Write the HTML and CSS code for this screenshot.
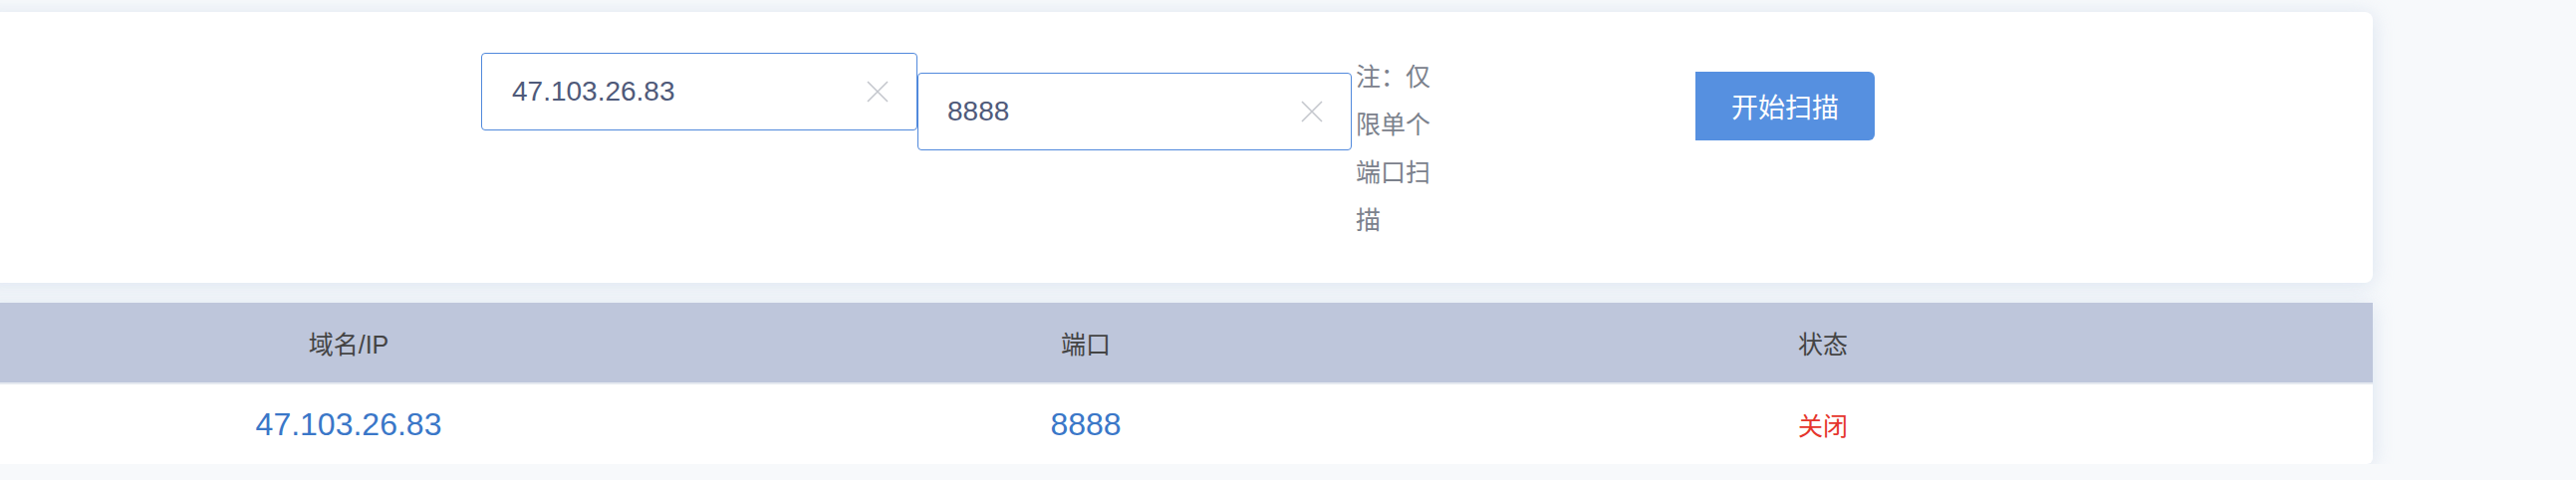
FILE: index.html
```html
<!DOCTYPE html>
<html lang="zh-CN">
<head>
<meta charset="utf-8">
<title>端口扫描</title>
<link rel="stylesheet" href="styles.css">
</head>
<body>
<div class="main">
  <div class="card">
    <div class="field field-host">
      <span class="field-value">47.103.26.83</span>
      <svg class="clear" viewBox="0 0 24 24" width="24" height="24"><path d="M2 2L22 22M22 2L2 22" stroke="#c4c7cd" stroke-width="1.6" fill="none"/></svg>
    </div>
    <div class="field field-port">
      <span class="field-value">8888</span>
      <svg class="clear" viewBox="0 0 24 24" width="24" height="24"><path d="M2 2L22 22M22 2L2 22" stroke="#c4c7cd" stroke-width="1.6" fill="none"/></svg>
    </div>
    <div class="note">注：仅限单个端口扫描</div>
    <button class="scan-btn">开始扫描</button>
  </div>

  <div class="result">
    <div class="row head">
      <div class="cell">域名/IP</div>
      <div class="cell">端口</div>
      <div class="cell">状态</div>
      <div class="cell"></div>
    </div>
    <div class="row body">
      <div class="cell link">47.103.26.83</div>
      <div class="cell link">8888</div>
      <div class="cell closed">关闭</div>
      <div class="cell"></div>
    </div>
  </div>
</div>
</body>
</html>
```

FILE: styles.css
```css
* { box-sizing: border-box; }

html, body {
  margin: 0;
  padding: 0;
  background: #f7f9fb;
  font-family: "Liberation Sans", "Noto Sans CJK SC", sans-serif;
  overflow: hidden;
}

.main {
  margin-left: -20px;
  width: 2402px;
  padding-top: 12px;
}

.card {
  height: 272px;
  background: #fff;
  border-radius: 8px;
  box-shadow: 0 2px 20px rgba(185, 202, 228, 0.45);
  display: flex;
  align-items: flex-start;
  padding-top: 41px;
  padding-left: 503px;
}

.field {
  height: 78px;
  width: 438px;
  border: 1.5px solid #5189dc;
  border-radius: 4px;
  display: flex;
  align-items: center;
  justify-content: space-between;
  padding: 0 27px 0 30px;
  background: #fff;
}

.field-port {
  width: 436px;
  margin-top: 20px;
  padding-left: 29px;
}

.field-value {
  font-size: 28px;
  color: #4f5a7a;
}

.clear { display: block; }

.note {
  width: 76px;
  margin-left: 4px;
  font-size: 25px;
  line-height: 48px;
  color: #7b818c;
  word-break: break-all;
}

.scan-btn {
  margin-left: 265px;
  margin-top: 19px;
  width: 180px;
  height: 69px;
  border: none;
  border-radius: 0 6px 6px 0;
  background: #5690e0;
  color: #fff;
  font-family: "Liberation Sans", "Noto Sans CJK SC", sans-serif;
  font-size: 27px;
  padding: 0;
}

.result {
  margin-top: 20px;
  background: #fff;
  border-radius: 0 0 6px 6px;
  box-shadow: 0 2px 20px rgba(185, 202, 228, 0.45);
  overflow: hidden;
}

.row {
  display: grid;
  grid-template-columns: 740px 740px 740px 1fr;
  height: 80px;
  align-items: center;
  text-align: center;
}

.head {
  background: #bec6db;
  color: #444;
  font-size: 25px;
}

.body {
  height: 82px;
  border-top: 2px solid #e5e9f0;
}

.link {
  color: #3a77c8;
  font-size: 32px;
}

.closed {
  color: #e5352c;
  font-size: 25px;
}
```
